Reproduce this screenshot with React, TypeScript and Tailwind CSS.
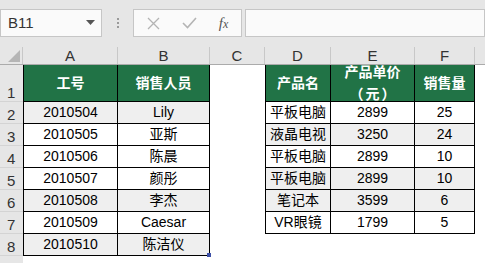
const font = { fontFamily: '"Liberation Sans", "Noto Sans CJK SC", sans-serif' }

const left = [
  ['2010504', 'Lily', true],
  ['2010505', '亚斯', false],
  ['2010506', '陈晨', false],
  ['2010507', '颜彤', false],
  ['2010508', '李杰', true],
  ['2010509', 'Caesar', false],
  ['2010510', '陈洁仪', true],
] as const

const right = [
  ['平板电脑', '2899', '25', false],
  ['液晶电视', '3250', '24', true],
  ['平板电脑', '2899', '10', false],
  ['平板电脑', '2899', '10', true],
  ['笔记本', '3599', '6', true],
  ['VR眼镜', '1799', '5', false],
] as const

const cols = [
  { name: 'A', w: 'w-[95px]' },
  { name: 'B', w: 'w-[92px]' },
  { name: 'C', w: 'w-[55px]' },
  { name: 'D', w: 'w-[66px]' },
  { name: 'E', w: 'w-[84px]' },
  { name: 'F', w: 'w-[60px]' },
]

const RowHead = ({ n, h }: { n: number; h: string }) => (
  <div className={`w-[23px] ${h} shrink-0 bg-[#e6e6e6] border-b border-[#d4d4d4] flex items-end pl-[7px] pb-[1px] text-[15px] leading-none text-[#333]`}>
    {n}
  </div>
)

export default function App() {
  return (
    <div className="w-[485px] h-[263px] overflow-hidden bg-white text-black" style={font}>
      {/* toolbar */}
      <div className="h-[47px] bg-[#e6e6e6] flex items-start pt-[9px]">
        <div className="w-[102px] h-[28px] bg-[#fafafa] border border-[#c6c6c6] flex items-center justify-between pl-[7px] pr-[6px]">
          <span className="text-[15px] text-[#333]">B11</span>
          <svg width="9" height="6" viewBox="0 0 9 6"><path d="M0 0h9L4.5 5z" fill="#555" /></svg>
        </div>
        <div className="w-[31px] h-[28px] flex flex-col items-center justify-center gap-[2px]">
          <span className="w-[2px] h-[2px] bg-[#9a9a9a]" />
          <span className="w-[2px] h-[2px] bg-[#9a9a9a]" />
          <span className="w-[2px] h-[2px] bg-[#9a9a9a]" />
        </div>
        <div className="w-[109px] h-[28px] bg-[#fafafa] border border-[#c6c6c6] flex items-center">
          <div className="w-[36px] flex justify-center pl-[2px]">
            <svg width="13" height="13" viewBox="0 0 13 13"><path d="M1 1l11 11M12 1L1 12" stroke="#b4b4b4" strokeWidth="1.3" /></svg>
          </div>
          <div className="w-[38px] flex justify-center">
            <svg width="15" height="12" viewBox="0 0 15 12"><path d="M1 6l4.5 4.5L14 1" stroke="#b4b4b4" strokeWidth="1.6" fill="none" /></svg>
          </div>
          <div className="flex-1 flex justify-center pr-[2px]">
            <span className="text-[15px] italic text-[#555]" style={{ fontFamily: '"Liberation Serif", serif' }}>
              f<span className="text-[12px]">x</span>
            </span>
          </div>
        </div>
        <div className="ml-[3px] flex-1 h-[28px] bg-[#fafafa] border border-[#c6c6c6]" />
      </div>

      {/* column header */}
      <div className="flex h-[18px] bg-[#e6e6e6] border-b border-[#ababab]">
        <div className="w-[23px] h-full shrink-0 flex items-end justify-end pr-[2px] pb-[2px] border-r border-[#c8c8c8]">
          <svg width="12" height="12" viewBox="0 0 12 12"><path d="M12 0v12H0z" fill="#b5b5b5" /></svg>
        </div>
        {cols.map((c) => (
          <div key={c.name} className={`${c.w} shrink-0 border-r border-[#c8c8c8] flex items-center justify-center text-[15px] leading-none text-[#333]`}>
            {c.name}
          </div>
        ))}
        <div className="flex-1" />
      </div>

      {/* row 1 */}
      <div className="flex">
        <RowHead n={1} h="h-[37px]" />
        <div className="flex h-[37px] bg-[#217346] text-white font-bold text-[14px] border-l border-b border-black">
          <div className="w-[94px] border-r border-black flex items-center justify-center">工号</div>
          <div className="w-[92px] border-r border-black flex items-center justify-center">销售人员</div>
        </div>
        <div className="w-[55px]" />
        <div className="flex h-[37px] bg-[#217346] text-white font-bold text-[14px] border-l border-b border-black">
          <div className="w-[65px] border-r border-black flex items-center justify-center">产品名</div>
          <div className="w-[84px] border-r border-black flex flex-col items-center justify-center leading-[22px]">
            <span>产品单价</span>
            <span className="flex gap-[2px]">
              <span>（</span>
              <span>元</span>
              <span>）</span>
            </span>
          </div>
          <div className="w-[60px] border-r border-black flex items-center justify-center">销售量</div>
        </div>
      </div>

      {/* data rows */}
      {Array.from({ length: 8 }).map((_, i) => {
        const l = left[i]
        const r = right[i]
        return (
          <div key={i} className="flex text-[14px]">
            <RowHead n={i + 2} h="h-[22px]" />
            {l ? (
              <div className={`flex h-[22px] border-l border-b border-black ${l[2] ? 'bg-[#efefef]' : 'bg-white'}`}>
                <div className="w-[94px] border-r border-black flex items-center justify-center">{l[0]}</div>
                <div className="relative w-[92px] border-r border-black flex items-center justify-center">
                  {l[1]}
                  {i === 6 && <span className="absolute right-[-2px] bottom-[-2px] w-[4px] h-[4px] bg-[#3c4fa6]" />}
                </div>
              </div>
            ) : (
              <div className="w-[187px]" />
            )}
            <div className="w-[55px]" />
            {r && (
              <div className={`flex h-[22px] border-l border-b border-black ${r[3] ? 'bg-[#efefef]' : 'bg-white'}`}>
                <div className="w-[65px] border-r border-black flex items-center justify-center">{r[0]}</div>
                <div className="w-[84px] border-r border-black flex items-center justify-center">{r[1]}</div>
                <div className="w-[60px] border-r border-black flex items-center justify-center">{r[2]}</div>
              </div>
            )}
          </div>
        )
      })}
    </div>
  )
}
